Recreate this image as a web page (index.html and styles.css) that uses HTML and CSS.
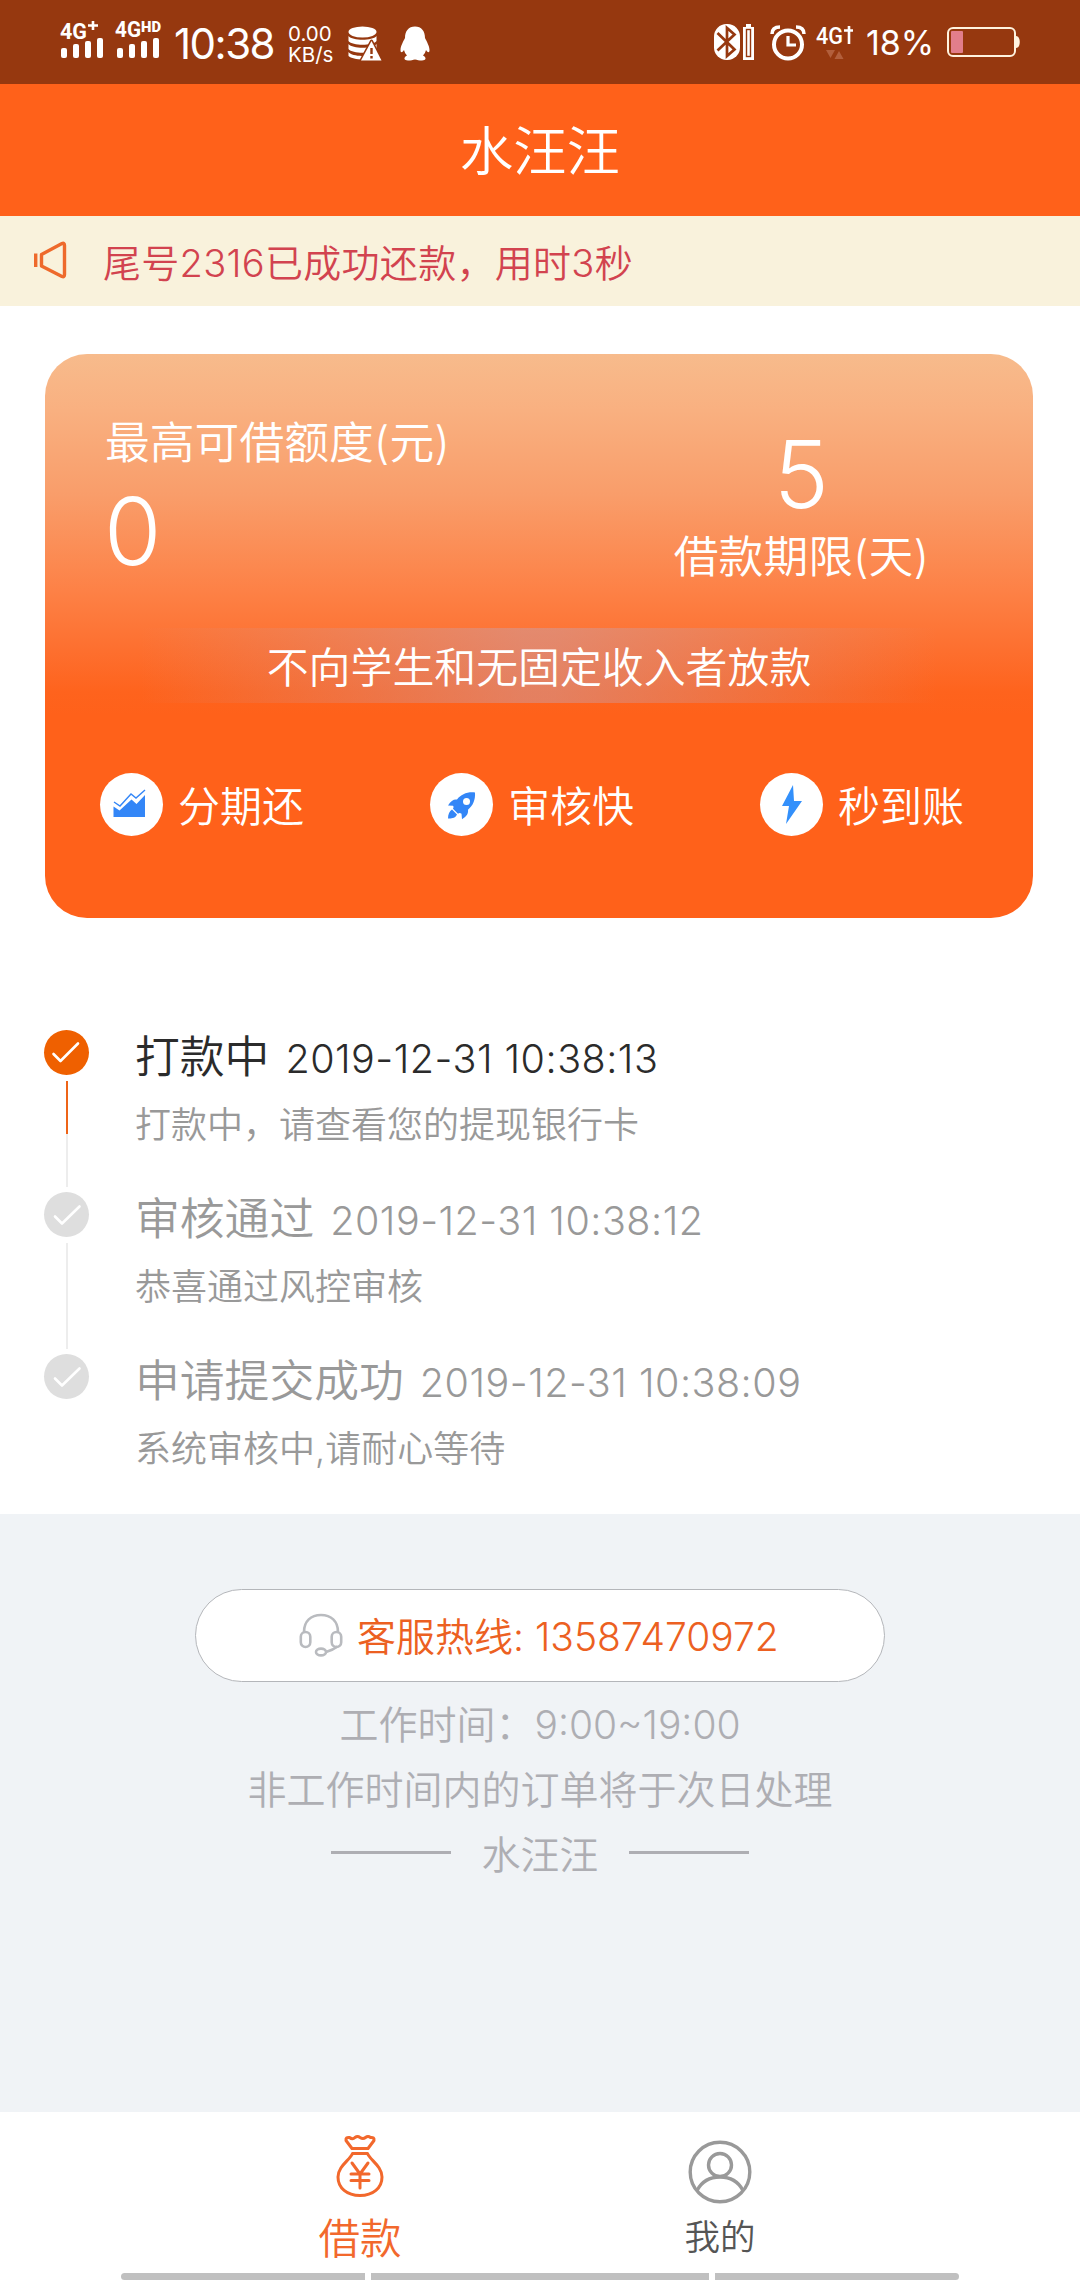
FILE: index.html
```html
<!DOCTYPE html>
<html lang="zh-CN">
<head>
<meta charset="utf-8">
<title>水汪汪</title>
<link rel="stylesheet" href="styles.css">
</head>
<body>
<div class="status">
  <svg class="signal" width="110" height="40" viewBox="0 0 110 40" fill="#fff">
    <text x="0" y="18" class="net" textLength="27" lengthAdjust="spacingAndGlyphs">4G</text>
    <path d="M28 4.500h10M33 0v9" stroke="#fff" stroke-width="2.600"/>
    <rect x="1" y="27" width="6" height="10" rx="2"/><rect x="13" y="23" width="6" height="14" rx="2"/><rect x="25" y="20" width="6" height="17" rx="2"/><rect x="37" y="17" width="6" height="20" rx="2"/>
    <text x="55" y="16" class="net" textLength="26" lengthAdjust="spacingAndGlyphs">4G</text>
    <text x="81" y="11" class="hd" textLength="20" lengthAdjust="spacingAndGlyphs">HD</text>
    <rect x="57" y="27" width="6" height="10" rx="2"/><rect x="69" y="23" width="6" height="14" rx="2"/><rect x="81" y="20" width="6" height="17" rx="2"/><rect x="93" y="17" width="6" height="20" rx="2"/>
  </svg>
  <span class="clock">10:38</span>
  <span class="speed"><span>0.00</span><span>KB/s</span></span>
  <svg class="disk" width="34" height="36" viewBox="0 0 34 36">
    <g fill="#fff"><ellipse cx="14.500" cy="6" rx="14" ry="5.500"/>
    <path d="M.5 10c4 5 24 5 28 0v5c-4 5-24 5-28 0zM.5 18c4 5 24 5 28 0v5c-4 5-24 5-28 0zM.5 26c4 5 20 5 26 1v4c-6 4-22 3-26-1z"/></g>
    <path d="M23.500 15 33.500 34.500H13z" fill="#fff" stroke="#96380f" stroke-width="3" stroke-linejoin="round" paint-order="stroke"/>
    <path d="M23.500 22v6M23.500 30v2.500" stroke="#96380f" stroke-width="2.400"/>
  </svg>
  <svg class="penguin" width="30" height="36" viewBox="0 0 30 36"><path fill="#fff" d="M15 .5C8.500.5 5 5 5 12c-1.500 3-4.500 8-4.500 12 0 3 1.500 3 3.500 0 .8 2.500 1.500 4 3 5.500-4 2-3 5 1 5 3 0 5-.5 7-1 2 .5 4 1 7 1 4 0 5-3 1-5 1.500-1.500 2.200-3 3-5.500 2 3 3.500 3 3.500 0 0-4-3-9-4.500-12C25 5 21.500.5 15 .5z"/></svg>
  <span class="gap"></span>
  <svg class="bt" width="42" height="38" viewBox="0 0 42 38">
    <rect x="0" y="1" width="26" height="36" rx="12.500" fill="#fff"/>
    <path d="M3.500 10 20.500 26.500 13 33V5l7.500 6.500L3.500 27.500" fill="none" stroke="#96380f" stroke-width="2.700"/>
    <path d="M29 4h3V1h5v3h3v33H29z" fill="#fff"/><rect x="32.500" y="6.500" width="4" height="27" fill="#fff" stroke="#96380f" stroke-width="1.400"/>
  </svg>
  <svg class="alarm" width="36" height="36" viewBox="0 0 36 36" fill="none" stroke="#fff">
    <circle cx="18" cy="19.500" r="14" stroke-width="4"/><path d="M18 11v9h8" stroke-width="3.200"/>
    <path d="M2 9C2 4 5 2 10 2M34 9c0-5-3-7-8-7" stroke-width="3.500"/>
  </svg>
  <svg class="lte" width="38" height="38" viewBox="0 0 38 38">
    <text x="0" y="20" class="net thin" fill="#fff" textLength="27" lengthAdjust="spacingAndGlyphs">4G</text>
    <path d="M28 6.500h9M33 2v18" stroke="#fff" stroke-width="2.600"/>
    <path d="M10 26h9l-4.500 8zM18.500 35h9L23 27z" fill="#b25f3c"/>
  </svg>
  <span class="percent">18%</span>
  <svg class="battery" width="73" height="32" viewBox="0 0 73 32"><rect x="1" y="2" width="67" height="28" rx="5" fill="none" stroke="#fff3df" stroke-width="2"/><rect x="4" y="5" width="12" height="22" rx="1" fill="#e27e8b"/><path d="M69 10c5 0 5 12 0 12z" fill="#fff3df"/></svg>
</div>

<header class="header">水汪汪</header>

<div class="notice">
  <svg width="33" height="38" viewBox="0 0 33 38" fill="none" stroke="#ee6a2c" stroke-width="3.400"><path d="M7.500 13.500 28 2.500q2.500-1 2.500 2v29q0 3-2.500 2L7.500 25z" stroke-linejoin="round"/><path d="M1.700 12.500v13.500"/></svg>
  <span>尾号2316已成功还款，用时3秒</span>
</div>

<main class="main">
  <section class="card">
    <div class="figures">
      <div class="limit"><p class="label">最高可借额度(元)</p><p class="value">0</p></div>
      <div class="term"><p class="value">5</p><p class="label">借款期限(天)</p></div>
    </div>
    <p class="band">不向学生和无固定收入者放款</p>
    <ul class="features">
      <li><svg width="63" height="63" viewBox="0 0 63 63"><circle cx="31.500" cy="31.500" r="31.500" fill="#fff"/><path d="M13.500 33.500l6 4 12-11 5 4.500 8.500-9v22H13.500z" fill="#3386f7"/><path d="M14 29l6 4 11-12 5 4 9-8" fill="none" stroke="#3386f7" stroke-width="1.400"/></svg><span>分期还</span></li>
      <li><svg width="63" height="63" viewBox="0 0 63 63"><circle cx="31.500" cy="31.500" r="31.500" fill="#fff"/><path d="M45 19.500c-8-.8-14 2-18 7-3-.6-6 1-9 6l5 .2c1 1 .4 2 0 3l5 5c1-.6 2-1 3.500 0l.5 5.500c5-3 6.500-6 6-9.500 5-4 7.500-10 7-17.200zM22 36.500c-2.500 1.500-4 5-4 9 4 .2 7.500-.5 9-4z" fill="#3386f7"/><circle cx="36.500" cy="28.500" r="3.500" fill="#fff"/></svg><span>审核快</span></li>
      <li><svg width="63" height="63" viewBox="0 0 63 63"><circle cx="31.500" cy="31.500" r="31.500" fill="#fff"/><path d="M33 12 22 33h7l-3 18 16-23h-8z" fill="#3390fb"/></svg><span>秒到账</span></li>
    </ul>
  </section>

  <ol class="timeline">
    <li class="step active">
      <div class="rail"><svg class="dot" viewBox="0 0 45 45"><circle cx="22.500" cy="22.500" r="22.500"/><path d="M9.500 24l7 7L34 13.500"/></svg><i class="line"></i></div>
      <div><p class="title">打款中<time>2019-12-31 10:38:13</time></p><p class="desc">打款中，请查看您的提现银行卡</p></div>
    </li>
    <li class="step">
      <div class="rail"><svg class="dot" viewBox="0 0 45 45"><circle cx="22.500" cy="22.500" r="22.500"/><path d="M11 24.500l7 7L35.500 14.500"/></svg><i class="line"></i></div>
      <div><p class="title">审核通过<time>2019-12-31 10:38:12</time></p><p class="desc">恭喜通过风控审核</p></div>
    </li>
    <li class="step">
      <div class="rail"><svg class="dot" viewBox="0 0 45 45"><circle cx="22.500" cy="22.500" r="22.500"/><path d="M11 24.500l7 7L35.500 14.500"/></svg></div>
      <div><p class="title">申请提交成功<time>2019-12-31 10:38:09</time></p><p class="desc">系统审核中,请耐心等待</p></div>
    </li>
  </ol>
</main>

<footer class="contact">
  <div class="hotline">
    <svg width="44" height="44" viewBox="0 0 44 44" fill="none" stroke="#b9bbbf" stroke-width="2.600"><path d="M5 19C5 8 12 2 22 2s17 6 17 17M38.500 33.500Q34 37 27 39"/><rect x="1.800" y="19" width="9.500" height="15" rx="4.700"/><rect x="32.700" y="19" width="9.500" height="15" rx="4.700"/><ellipse cx="22" cy="39" rx="5" ry="3.400"/></svg>
    <span>客服热线: <b>13587470972</b></span>
  </div>
  <p class="hours">工作时间：<b>9:00~19:00</b></p>
  <p>非工作时间内的订单将于次日处理</p>
  <p class="brand"><span>水汪汪</span></p>
</footer>

<nav class="tabs">
  <a class="tab on">
    <svg width="50" height="66" viewBox="0 0 50 66" fill="none" stroke="#f2682c" stroke-width="3" stroke-linejoin="round" stroke-linecap="round"><path d="M17 15.500 11 7.500q-.5-3.500 3.500-3 3 2.500 5.500 0 2.500-2 5 0 3 2 5.500 0 2.500-2 5 0 4-.5 3.500 3L33 15.500z"/><path d="M17.500 20.500h15C35 27 47 33 47 44 47 55 38 62.500 25 62.500S3 55 3 44C3 33 15 27 17.500 20.500z"/><path d="M17 30l8 11 8-11M16 41h18M16 47.500h18M25 41v14"/></svg>
    <span>借款</span>
  </a>
  <a class="tab">
    <svg width="64" height="66" viewBox="0 0 64 66" fill="none" stroke="#999" stroke-width="3.400"><circle cx="32" cy="33" r="29.800"/><circle cx="32" cy="26" r="11.500"/><path d="M9 51.500C14 42 22 38 32 38s18 4 23 13.500"/></svg>
    <span>我的</span>
  </a>
  <div class="gesture"><i></i><i></i><i></i></div>
</nav>
</body>
</html>
```
FILE: styles.css
```css
* { box-sizing: border-box; margin: 0; padding: 0; }
body {
  width: 1080px;
  height: 2280px;
  display: flex;
  flex-direction: column;
  background: #fff;
  font-family: Inter, "Noto Sans CJK SC", sans-serif;
  font-weight: 350;
  white-space: nowrap;
  overflow: hidden;
}
ul, ol { list-style: none; }
svg { display: block; flex: none; overflow: visible; }
b { font-weight: 300; }

.status {
  height: 84px;
  flex: none;
  display: flex;
  align-items: flex-start;
  background: #96380f;
  color: #fff;
  padding-left: 60px;
}
.signal { margin-top: 21px; }
.net { font: 700 22px Roboto, sans-serif; }
.net.thin { font-weight: 500; font-size: 23px; }
.hd { font: 900 14px Roboto, sans-serif; }
.clock { font-size: 42px; font-weight: 400; line-height: 84px; margin: 2px 0 0 4px; width: 114px; letter-spacing: -1.500px; }
.speed { display: flex; flex-direction: column; font-size: 20.500px; font-weight: 400; line-height: 21px; padding-top: 23px; width: 60px; }
.disk { margin-top: 26px; }
.penguin { margin: 26px 0 0 18px; }
.gap { flex: 1; }
.bt { margin: 23px 0 0; }
.alarm { margin: 25px 0 0 14px; }
.lte { margin: 24px 0 0 10px; }
.percent { font-size: 34px; font-weight: 400; line-height: 86px; margin-left: 12px; width: 67px; }
.battery { margin: 26px 60px 0 14px; }

.header { height: 132px; flex: none; background: #ff611a; color: #fff; font-size: 53.500px; line-height: 136px; text-align: center; }
.notice {
  height: 90px;
  flex: none;
  display: flex;
  align-items: center;
  gap: 36px;
  padding: 0 0 2px 34px;
  background: #f9f2dc;
  color: #d2434f;
  font-size: 38px;
  letter-spacing: .3px;
}

.main { height: 1208px; flex: none; padding: 48px 47px 0 45px; }
.card {
  height: 564px;
  border-radius: 42px;
  color: #fff;
  background: linear-gradient(#f7bb8c, #f9b080 10%, #f99d6a 25%, #fd8146 42%, #fd7030 52%, #fe631d 60%, #ff611a 64%);
}
.figures { height: 274px; display: flex; justify-content: space-between; padding: 59px 104px 0 60px; }
.label { font-size: 44.800px; line-height: 60px; }
.value { font-size: 93px; line-height: 80px; font-weight: 300; }
.limit .value { margin: 18px 0 0 -1px; }
.term { padding-top: 21px; text-align: center; }
.term .label { line-height: 50px; margin-top: 18px; }
.band {
  height: 75px;
  margin: 0 95px;
  text-align: center;
  font-size: 41.900px;
  line-height: 79px;
  background: linear-gradient(90deg, rgba(200,160,170,0), rgba(200,160,170,.48) 48%, rgba(200,160,170,.48) 52%, rgba(200,160,170,0));
}
.features { display: grid; grid-template-columns: 330px 330px 1fr; padding: 70px 0 0 55px; font-size: 42px; line-height: 68px; }
.features li { display: flex; gap: 15px; }

.timeline { padding-top: 112px; color: #999; }
.step { display: flex; height: 162px; }
.rail { width: 45px; margin: 0 46px 0 -1px; }
.dot { width: 45px; height: 45px; fill: #dedede; }
.dot path { fill: none; stroke: #fff; stroke-width: 2.600px; stroke-linecap: round; stroke-linejoin: round; }
.line { display: block; width: 2px; height: 106px; margin: 6px 0 0 22px; background: #ededed; }
.title { font-size: 44.800px; line-height: 54px; }
.title time { font-size: 39.500px; margin-left: 16px; font-weight: 300; letter-spacing: .5px; }
.desc { font-size: 36px; line-height: 40px; margin-top: 19px; }
.active .dot { fill: #ef6000; }
.active .title { color: #2b2b2b; }
.active .line { background: linear-gradient(#ee6418 53px, #ededed 53px); }

.contact { flex: 1; background: #f0f3f6; color: #aeaeb3; font-size: 39px; line-height: 65px; text-align: center; padding-top: 75px; }
.hotline {
  width: 690px;
  height: 93px;
  margin: 0 auto 10px;
  display: flex;
  align-items: center;
  gap: 14px;
  padding: 2px 0 0 103px;
  border: 1px solid #b4b6ba;
  border-radius: 47px;
  background: #fff;
  color: #ec6021;
}
.hotline svg { margin-top: -4px; }

.brand { display: flex; justify-content: center; align-items: center; gap: 30px; }
.brand::before, .brand::after { content: ""; width: 120px; height: 3px; margin-bottom: 5px; background: #aeaeb3; }

.tabs { height: 168px; flex: none; display: grid; grid-template-columns: 360px 360px; padding-left: 180px; background: #fff; position: relative; }
.tab { display: flex; flex-direction: column; align-items: center; font-size: 35.500px; line-height: 44px; color: #555; padding-top: 27px; }
.tab span { margin-top: 11px; }
.tab.on { font-size: 41.500px; color: #f2682c; padding-top: 21px; }
.tab.on span { margin-top: 18px; }
.gesture { position: absolute; left: 121px; bottom: 0; width: 838px; height: 7px; display: grid; grid-template-columns: 244px 338px 244px; gap: 6px; border-radius: 4px; overflow: hidden; }
.gesture i { background: #c0c0c0; }
```
